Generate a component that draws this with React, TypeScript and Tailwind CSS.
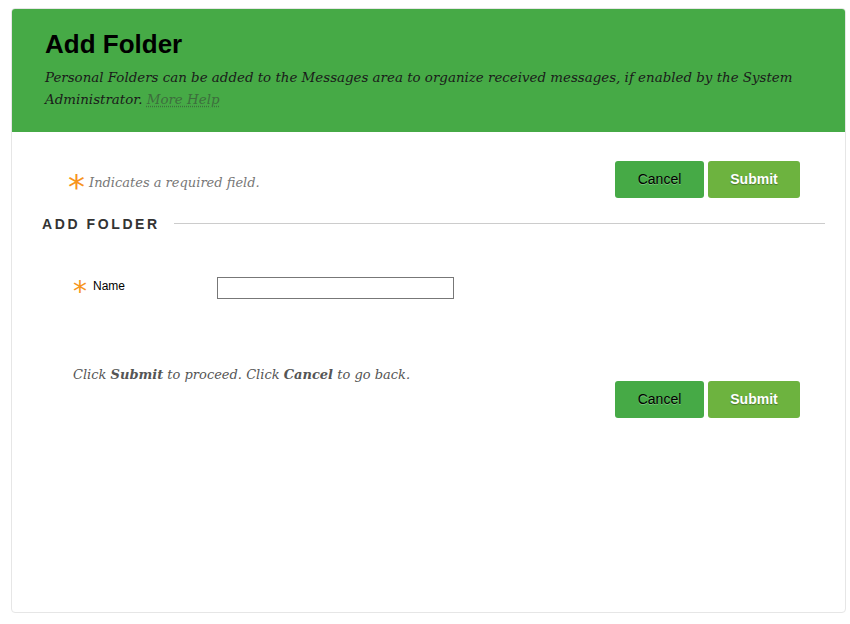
import React from "react";

const serif = { fontFamily: '"DejaVu Serif", "Liberation Serif", serif' };

function Buttons() {
  return (
    <div className="flex gap-[4px]">
      <button
        className="w-[89px] h-[37px] rounded-[3px] bg-[#46aa46] text-[14px] text-black"
        style={{ fontFamily: '"Liberation Sans", Arial, sans-serif', textShadow: "0 1px 0 rgba(255,255,255,0.3)" }}
      >
        Cancel
      </button>
      <button
        className="w-[92px] h-[37px] rounded-[3px] bg-[#6db33f] text-[14px] font-bold text-white"
        style={{ fontFamily: '"Liberation Sans", Arial, sans-serif', textShadow: "0 1px 1px rgba(0,0,0,0.35)" }}
      >
        Submit
      </button>
    </div>
  );
}

export default function App() {
  return (
    <div className="w-[850px] h-[624px] bg-white pt-[8px] pl-[11px]" style={{ fontFamily: '"Liberation Sans", Arial, sans-serif' }}>
      <div className="w-[835px] h-[605px] border border-[#e6e6e6] rounded-[4px] overflow-hidden flex flex-col">
        <div className="bg-[#46aa46] h-[123px] pl-[33px] pr-[30px] pt-[20px]">
          <h1 className="text-[26px] leading-[30px] font-bold text-black">Add Folder</h1>
          <p className="mt-[8px] text-[13.4px] leading-[22px] italic text-[#1a1a1a]" style={serif}>
            Personal Folders can be added to the Messages area to organize received messages, if enabled by the System
            Administrator.{" "}
            <span className="text-[#3d6e3d] underline decoration-dotted decoration-[#3d6e3d] underline-offset-[2px]">More Help</span>
          </p>
        </div>
        <div className="flex-1 flex flex-col">
          <div className="flex items-start justify-between pl-[56px] pr-[45px] pt-[29px]">
            <div className="flex items-center mt-[8px]">
              <span className="text-[#f7941d] text-[34px] leading-[20px] mt-[8px]" style={{ fontFamily: '"DejaVu Sans", sans-serif' }}>*</span>
              <span className="ml-[4px] text-[13px] italic text-[#777]" style={serif}>
                Indicates a required field.
              </span>
            </div>
            <Buttons />
          </div>
          <div className="flex items-center pl-[30px] pr-[20px] mt-[16px]">
            <h2 className="text-[14px] font-bold tracking-[2.6px] text-[#333]">ADD FOLDER</h2>
            <div className="flex-1 ml-[14px] h-px bg-[#cccccc] mt-[-2px]" />
          </div>
          <div className="flex items-center pl-[61px] mt-[41px]">
            <span className="text-[#f7941d] text-[28px] leading-[16px] mt-[8px] w-[14px]" style={{ fontFamily: '"DejaVu Sans", sans-serif' }}>*</span>
            <span className="ml-[6px] text-[12px] text-black w-[124px] mt-[-4px]">Name</span>
            <input className="w-[237px] h-[22px] border border-[#777] outline-none px-[2px]" />
          </div>
          <div className="flex items-start justify-between pl-[61px] pr-[45px] mt-[67px]">
            <p className="text-[13px] italic text-[#555] mt-[-2px]" style={serif}>
              Click <b>Submit</b> to proceed. Click <b>Cancel</b> to go back.
            </p>
            <div className="mt-[14px]">
              <Buttons />
            </div>
          </div>
        </div>
      </div>
    </div>
  );
}
